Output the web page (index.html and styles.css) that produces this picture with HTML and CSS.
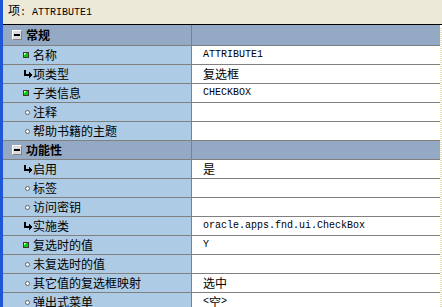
FILE: index.html
```html
<!DOCTYPE html>
<html lang="zh-CN">
<head>
  <meta charset="UTF-8" />
  <title>属性选项板</title>
  <link rel="stylesheet" href="styles.css">
</head>
<body>

<div class="palette">
  <div class="title">项<span class="en">: ATTRIBUTE1</span></div>

  <div class="grid">
    <div class="sheet">

      <div class="row cat first">
        <div class="name"><span class="toggle"></span>常规</div>
        <div class="value"></div>
      </div>
      <div class="row">
        <div class="name"><span class="ico"><i class="sq"></i></span>名称</div>
        <div class="value"><span class="en">ATTRIBUTE1</span></div>
      </div>
      <div class="row">
        <div class="name"><span class="ico"><svg class="arrow" width="8" height="8" viewBox="0 0 8 8"><path d="M0 0H2V4H5V6H0Z M5 2L8 5L5 8Z" fill="#000"/></svg></span>项类型</div>
        <div class="value">复选框</div>
      </div>
      <div class="row">
        <div class="name"><span class="ico"><i class="sq"></i></span>子类信息</div>
        <div class="value"><span class="en">CHECKBOX</span></div>
      </div>
      <div class="row">
        <div class="name"><span class="ico"><i class="dot"></i></span>注释</div>
        <div class="value"></div>
      </div>
      <div class="row">
        <div class="name"><span class="ico"><i class="dot"></i></span>帮助书籍的主题</div>
        <div class="value"></div>
      </div>

      <div class="row cat">
        <div class="name"><span class="toggle"></span>功能性</div>
        <div class="value"></div>
      </div>
      <div class="row">
        <div class="name"><span class="ico"><svg class="arrow" width="8" height="8" viewBox="0 0 8 8"><path d="M0 0H2V4H5V6H0Z M5 2L8 5L5 8Z" fill="#000"/></svg></span>启用</div>
        <div class="value">是</div>
      </div>
      <div class="row">
        <div class="name"><span class="ico"><i class="dot"></i></span>标签</div>
        <div class="value"></div>
      </div>
      <div class="row">
        <div class="name"><span class="ico"><i class="dot"></i></span>访问密钥</div>
        <div class="value"></div>
      </div>
      <div class="row">
        <div class="name"><span class="ico"><svg class="arrow" width="8" height="8" viewBox="0 0 8 8"><path d="M0 0H2V4H5V6H0Z M5 2L8 5L5 8Z" fill="#000"/></svg></span>实施类</div>
        <div class="value"><span class="en">oracle.apps.fnd.ui.CheckBox</span></div>
      </div>
      <div class="row">
        <div class="name"><span class="ico"><i class="sq"></i></span>复选时的值</div>
        <div class="value"><span class="en">Y</span></div>
      </div>
      <div class="row">
        <div class="name"><span class="ico"><i class="dot"></i></span>未复选时的值</div>
        <div class="value"></div>
      </div>
      <div class="row">
        <div class="name"><span class="ico"><i class="dot"></i></span>其它值的复选框映射</div>
        <div class="value">选中</div>
      </div>
      <div class="row">
        <div class="name"><span class="ico"><i class="dot"></i></span>弹出式菜单</div>
        <div class="value"><span class="en">&lt;</span>空<span class="en">&gt;</span></div>
      </div>

    </div>
    <div class="edge"></div>
  </div>
</div>

</body>
</html>
```

FILE: styles.css
```css
body {
  margin: 0;
  font-family: "Noto Sans CJK SC", sans-serif;
  font-size: 12px;
  color: #000;
  background: #fff;
}

.palette {
  width: 439px;
  height: 307px;
  overflow: hidden;
  border-left: 3px solid #2057d6;
}

.en {
  font-family: "Liberation Mono", monospace;
  font-size: 10px;
}

.title {
  height: 21px;
  padding: 3px 0 0 5px;
  line-height: 14px;
  background: #ece9d8;
  border-bottom: 1px solid #000;
}

.grid {
  display: flex;
}

.sheet {
  width: 437px;
}

.edge {
  width: 2px;
  margin-top: 2px;
  background: repeating-linear-gradient(#fff 0 1px, #e6dfbd 1px 2px);
}

.row {
  display: grid;
  grid-template-columns: 189px 1fr;
  height: 18px;
  border-bottom: 1px solid #808080;
}

.row.first {
  height: 20px;
}

.name {
  display: flex;
  align-items: center;
  padding-left: 19px;
  background: #adcbe4;
  border-right: 1px solid #808080;
  line-height: 14px;
  white-space: nowrap;
}

.value {
  display: flex;
  align-items: center;
  padding-left: 11px;
  background: #fff;
  line-height: 14px;
  white-space: nowrap;
}

.cat .name,
.cat .value {
  background: #94a9c4;
}

.cat .name {
  padding-left: 9px;
  font-weight: bold;
}

.toggle {
  position: relative;
  width: 8px;
  height: 8px;
  margin-right: 4px;
  background: #dcdcdc;
  border: 1px solid;
  border-color: #fff #808080 #808080 #fff;
}

.toggle::after {
  content: "";
  position: absolute;
  left: 1px;
  top: 3px;
  width: 6px;
  height: 2px;
  background: #000;
}

.ico {
  display: flex;
  align-items: center;
  width: 11px;
}

.sq {
  width: 4px;
  height: 4px;
  margin-left: 1px;
  border: 1px solid #3c3c3c;
  background: linear-gradient(135deg, #c8ffc8 0 30%, #00d000 30%);
}

.dot {
  width: 3px;
  height: 3px;
  margin-left: 3px;
  border: 1px solid #606060;
  border-radius: 50%;
  background: #fff;
}

.arrow {
  display: block;
  margin-left: 2px;
  shape-rendering: crispEdges;
}
```
